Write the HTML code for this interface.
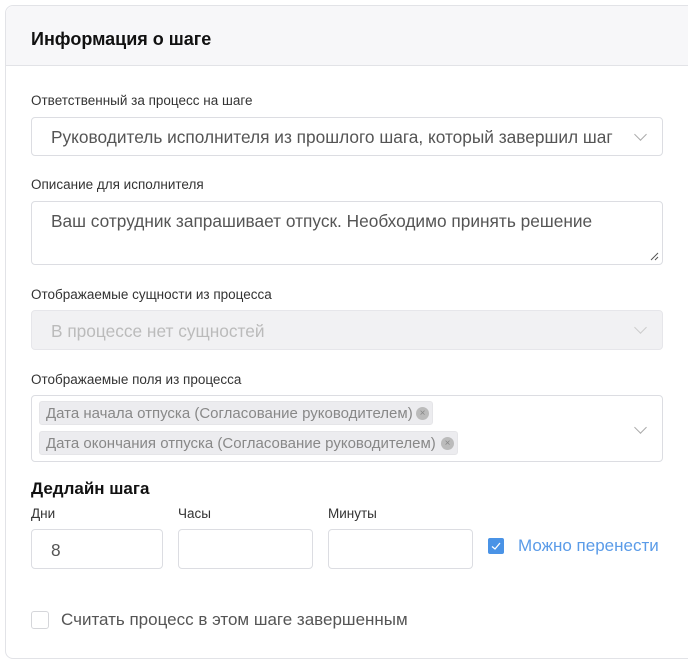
<!DOCTYPE html>
<html><head><meta charset="utf-8"><style>
*{box-sizing:border-box;margin:0;padding:0}
body{width:688px;height:662px;background:#fff;font-family:"Liberation Sans",sans-serif;position:relative;overflow:hidden;color:#333}
.card{position:absolute;left:5px;top:5px;width:700px;height:654px;border:1px solid #e2e3e7;border-radius:8px;background:#fff}
.hdr{position:absolute;left:0;top:0;right:0;height:60px;background:#f7f7f9;border-bottom:1px solid #e2e3e7;border-radius:8px 0 0 0}
.a{position:absolute;white-space:nowrap}
.t{font-weight:bold;font-size:18px;color:#111}
.lbl{font-size:13.5px;color:#333}
.box{position:absolute;border:1px solid #dcdde2;border-radius:4px;background:#fff}
.txt{font-size:17.3px;color:#555;position:absolute;white-space:nowrap}
.chev{position:absolute;width:9px;height:9px;border-right:1.3px solid #aaa;border-bottom:1.3px solid #aaa;transform:rotate(45deg)}
.tag{position:absolute;left:7px;height:24px;background:#ececef;border-radius:3px;font-size:15px;color:#888;padding:3px 0 0 6px;border:1px solid #e5e5e8;white-space:nowrap}
.x{position:absolute;top:5px;width:13px;height:13px;border-radius:50%;background:#bbb;color:#888;font-size:10px;line-height:13px;text-align:center}
</style></head><body>
<div class="card"><div class="hdr"></div></div>
<div class="a t" style="left:31px;top:29px">Информация о шаге</div>

<div class="a lbl" style="left:31px;top:93px">Ответственный за процесс на шаге</div>
<div class="box" style="left:31px;top:117px;width:632px;height:39px">
<div class="txt" style="left:19px;top:9px">Руководитель исполнителя из прошлого шага, который завершил шаг</div>
<div class="chev" style="left:604px;top:12px"></div></div>

<div class="a lbl" style="left:31px;top:177px">Описание для исполнителя</div>
<div class="box" style="left:31px;top:201px;width:632px;height:64px">
<div class="txt" style="left:19px;top:9px">Ваш сотрудник запрашивает отпуск. Необходимо принять решение</div>
<svg class="a" style="right:3px;bottom:3px" width="9" height="9"><path d="M8 1L1 8M8 5L5 8" stroke="#555" stroke-width="1"/></svg></div>

<div class="a lbl" style="left:31px;top:287px">Отображаемые сущности из процесса</div>
<div class="box" style="left:31px;top:310px;width:632px;height:40px;background:#f1f1f3;border-color:#e6e6ea">
<div class="txt" style="left:19px;top:10px;color:#bbb">В процессе нет сущностей</div>
<div class="chev" style="left:604px;top:12px;border-color:#ccc"></div></div>

<div class="a lbl" style="left:31px;top:372px">Отображаемые поля из процесса</div>
<div class="box" style="left:31px;top:395px;width:632px;height:67px">
<div class="tag" style="top:5px;width:394px">Дата начала отпуска (Согласование руководителем)<span class="x" style="left:376px">×</span></div>
<div class="tag" style="top:35px;width:419px">Дата окончания отпуска (Согласование руководителем)<span class="x" style="left:401px">×</span></div>
<div class="chev" style="left:604px;top:27px"></div></div>

<div class="a t" style="left:31px;top:479px;font-size:17px">Дедлайн шага</div>
<div class="a lbl" style="left:31px;top:506px">Дни</div>
<div class="a lbl" style="left:178px;top:506px">Часы</div>
<div class="a lbl" style="left:328px;top:506px">Минуты</div>
<div class="box" style="left:31px;top:529px;width:132px;height:40px"><div class="txt" style="left:19px;top:10px">8</div></div>
<div class="box" style="left:178px;top:529px;width:135px;height:40px"></div>
<div class="box" style="left:328px;top:529px;width:145px;height:40px"></div>
<div class="a" style="left:488px;top:538px;width:16px;height:16px;background:#4a93e6;border-radius:2px">
<svg width="16" height="16"><path d="M4 8.5L7 11L12 5" stroke="#fff" stroke-width="1.3" fill="none"/></svg></div>
<div class="a" style="left:518px;top:536px;font-size:17px;color:#5a9be8">Можно перенести</div>

<div class="a" style="left:31px;top:611px;width:18px;height:18px;border:1px solid #d5d6da;border-radius:3px"></div>
<div class="a" style="left:61px;top:610px;font-size:17px;color:#555">Считать процесс в этом шаге завершенным</div>
</body></html>
